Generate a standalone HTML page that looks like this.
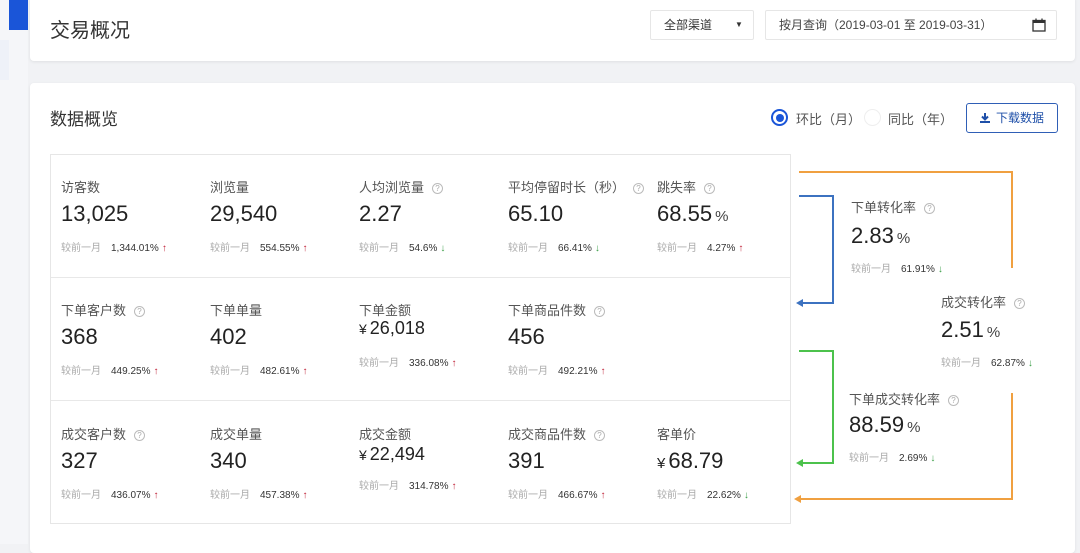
<!DOCTYPE html>
<html><head><meta charset="utf-8"><style>
*{margin:0;padding:0;box-sizing:border-box}
body{width:1080px;height:544px;overflow:hidden;background:#f1f2f5;font-family:"Liberation Sans","Noto Sans CJK SC",sans-serif;color:#333;position:relative}
.a{position:absolute;white-space:nowrap}
.card{position:absolute;background:#fff;border-radius:4px;box-shadow:0 1px 3px rgba(0,0,0,.08)}
.lab{font-size:13px;color:#555}
.q{display:inline-block;width:11px;height:11px;border:1px solid #bbb;border-radius:50%;font-size:8px;line-height:9px;text-align:center;color:#aaa;margin-left:8px;vertical-align:1px}
.val{font-size:22px;color:#222}
.val small{font-size:15px;color:#444;margin-left:3px}
.mon{font-size:18px;color:#222}
.mon span{font-size:14px;margin-right:3px}
.cmp{font-size:10px;color:#aaa}
.cmp b{font-weight:normal;color:#333;margin-left:10px}
.up{color:#c0243a;font-weight:bold;margin-left:3px}
.dn{color:#3ea04a;font-weight:bold;margin-left:3px}
</style></head><body>
<div class="a" style="left:0;top:0;width:28px;height:544px;background:#f5f6f9"></div>
<div class="a" style="left:9;left:9px;top:0;width:19px;height:30px;background:#1a55d8"></div>
<div class="a" style="left:0;top:40px;width:9px;height:40px;background:#eef1f8"></div>

<div class="card" style="left:30px;top:-4px;width:1045px;height:65px"></div>
<div class="a" style="left:50px;top:14px;font-size:20px;color:#333">交易概况</div>
<div class="a" style="left:650px;top:10px;width:104px;height:30px;border:1px solid #e6e6e6;border-radius:2px;font-size:12px;line-height:28px;padding-left:13px;color:#333">全部渠道<span style="position:absolute;left:84px;top:0;font-size:8px">▼</span></div>
<div class="a" style="left:765px;top:10px;width:292px;height:30px;border:1px solid #e6e6e6;border-radius:2px;font-size:12px;line-height:28px;padding-left:13px;color:#444">按月查询（2019-03-01 至 2019-03-31）
<svg style="position:absolute;left:266px;top:7px" width="14" height="14" viewBox="0 0 14 14"><rect x="1" y="2.5" width="12" height="10.5" fill="none" stroke="#333" stroke-width="1.3"/><rect x="1" y="2.5" width="12" height="2.5" fill="#333"/><line x1="4" y1="0.5" x2="4" y2="3" stroke="#333" stroke-width="1.3"/><line x1="10" y1="0.5" x2="10" y2="3" stroke="#333" stroke-width="1.3"/></svg></div>

<div class="card" style="left:30px;top:83px;width:1045px;height:470px"></div>
<div class="a" style="left:50px;top:105px;font-size:17px;color:#333">数据概览</div>
<div class="a" style="left:771px;top:109px;width:17px;height:17px;border-radius:50%;border:2px solid #1a55d8;background:#fff"><div style="margin:2.5px;width:8px;height:8px;border-radius:50%;background:#1a55d8"></div></div>
<div class="a" style="left:796px;top:109px;font-size:13px;color:#555">环比（月）</div>
<div class="a" style="left:864px;top:109px;width:17px;height:17px;border-radius:50%;border:1px solid #eee"></div>
<div class="a" style="left:888px;top:109px;font-size:13px;color:#555">同比（年）</div>
<div class="a" style="left:966px;top:103px;width:92px;height:30px;border:1px solid #2f5fb6;border-radius:3px;font-size:12px;line-height:28px;color:#1e4fa8;padding-left:29px">下载数据
<svg style="position:absolute;left:12px;top:8px" width="12" height="12" viewBox="0 0 12 12"><path d="M6 1v6M3 4.5l3 3 3-3" stroke="#1e4fa8" stroke-width="2" fill="none"/><rect x="1" y="9" width="10" height="2" fill="#1e4fa8"/></svg></div>

<div class="a" style="left:50px;top:154px;width:741px;height:370px;border:1px solid #e6e6e6;background:#fff"></div>
<div class="a" style="left:51px;top:277px;width:739px;height:1px;background:#e8e8e8"></div>
<div class="a" style="left:51px;top:400px;width:739px;height:1px;background:#e8e8e8"></div>

<!-- row1 -->
<div class="a lab" style="left:61px;top:177px">访客数</div>
<div class="a val" style="left:61px;top:201px">13,025</div>
<div class="a cmp" style="left:61px;top:239px">较前一月<b>1,344.01%</b><span class="up">↑</span></div>
<div class="a lab" style="left:210px;top:177px">浏览量</div>
<div class="a val" style="left:210px;top:201px">29,540</div>
<div class="a cmp" style="left:210px;top:239px">较前一月<b>554.55%</b><span class="up">↑</span></div>
<div class="a lab" style="left:359px;top:177px">人均浏览量<span class="q">?</span></div>
<div class="a val" style="left:359px;top:201px">2.27</div>
<div class="a cmp" style="left:359px;top:239px">较前一月<b>54.6%</b><span class="dn">↓</span></div>
<div class="a lab" style="left:508px;top:177px">平均停留时长（秒）<span class="q">?</span></div>
<div class="a val" style="left:508px;top:201px">65.10</div>
<div class="a cmp" style="left:508px;top:239px">较前一月<b>66.41%</b><span class="dn">↓</span></div>
<div class="a lab" style="left:657px;top:177px">跳失率<span class="q">?</span></div>
<div class="a val" style="left:657px;top:201px">68.55<small>%</small></div>
<div class="a cmp" style="left:657px;top:239px">较前一月<b>4.27%</b><span class="up">↑</span></div>
<!-- row2 -->
<div class="a lab" style="left:61px;top:300px">下单客户数<span class="q">?</span></div>
<div class="a val" style="left:61px;top:324px">368</div>
<div class="a cmp" style="left:61px;top:362px">较前一月<b>449.25%</b><span class="up">↑</span></div>
<div class="a lab" style="left:210px;top:300px">下单单量</div>
<div class="a val" style="left:210px;top:324px">402</div>
<div class="a cmp" style="left:210px;top:362px">较前一月<b>482.61%</b><span class="up">↑</span></div>
<div class="a lab" style="left:359px;top:300px">下单金额</div>
<div class="a mon" style="left:359px;top:318px"><span>¥</span>26,018</div>
<div class="a cmp" style="left:359px;top:354px">较前一月<b>336.08%</b><span class="up">↑</span></div>
<div class="a lab" style="left:508px;top:300px">下单商品件数<span class="q">?</span></div>
<div class="a val" style="left:508px;top:324px">456</div>
<div class="a cmp" style="left:508px;top:362px">较前一月<b>492.21%</b><span class="up">↑</span></div>
<!-- row3 -->
<div class="a lab" style="left:61px;top:424px">成交客户数<span class="q">?</span></div>
<div class="a val" style="left:61px;top:448px">327</div>
<div class="a cmp" style="left:61px;top:486px">较前一月<b>436.07%</b><span class="up">↑</span></div>
<div class="a lab" style="left:210px;top:424px">成交单量</div>
<div class="a val" style="left:210px;top:448px">340</div>
<div class="a cmp" style="left:210px;top:486px">较前一月<b>457.38%</b><span class="up">↑</span></div>
<div class="a lab" style="left:359px;top:424px">成交金额</div>
<div class="a mon" style="left:359px;top:444px"><span>¥</span>22,494</div>
<div class="a cmp" style="left:359px;top:477px">较前一月<b>314.78%</b><span class="up">↑</span></div>
<div class="a lab" style="left:508px;top:424px">成交商品件数<span class="q">?</span></div>
<div class="a val" style="left:508px;top:448px">391</div>
<div class="a cmp" style="left:508px;top:486px">较前一月<b>466.67%</b><span class="up">↑</span></div>
<div class="a lab" style="left:657px;top:424px">客单价</div>
<div class="a val" style="left:657px;top:448px"><span style="font-size:15px;margin-right:3px">¥</span>68.79</div>
<div class="a cmp" style="left:657px;top:486px">较前一月<b>22.62%</b><span class="dn">↓</span></div>

<svg class="a" style="left:0;top:0" width="1080" height="544">
<polyline points="799,172 1012,172 1012,268" fill="none" stroke="#f0a040" stroke-width="2"/>
<polyline points="1012,393 1012,499 800,499" fill="none" stroke="#f0a040" stroke-width="2"/>
<path d="M794,499 l7,-4 v8z" fill="#f0a040"/>
<polyline points="799,196 833,196 833,303 802,303" fill="none" stroke="#3c72c0" stroke-width="2"/>
<path d="M796,303 l7,-4 v8z" fill="#3c72c0"/>
<polyline points="799,351 833,351 833,463 802,463" fill="none" stroke="#4cc24c" stroke-width="2"/>
<path d="M796,463 l7,-4 v8z" fill="#4cc24c"/>
</svg>

<div class="a lab" style="left:851px;top:197px">下单转化率<span class="q">?</span></div>
<div class="a val" style="left:851px;top:223px">2.83<small>%</small></div>
<div class="a cmp" style="left:851px;top:260px">较前一月<b>61.91%</b><span class="dn">↓</span></div>
<div class="a lab" style="left:941px;top:292px">成交转化率<span class="q">?</span></div>
<div class="a val" style="left:941px;top:317px">2.51<small>%</small></div>
<div class="a cmp" style="left:941px;top:354px">较前一月<b>62.87%</b><span class="dn">↓</span></div>
<div class="a lab" style="left:849px;top:389px">下单成交转化率<span class="q">?</span></div>
<div class="a val" style="left:849px;top:412px">88.59<small>%</small></div>
<div class="a cmp" style="left:849px;top:449px">较前一月<b>2.69%</b><span class="dn">↓</span></div>
</body></html>
